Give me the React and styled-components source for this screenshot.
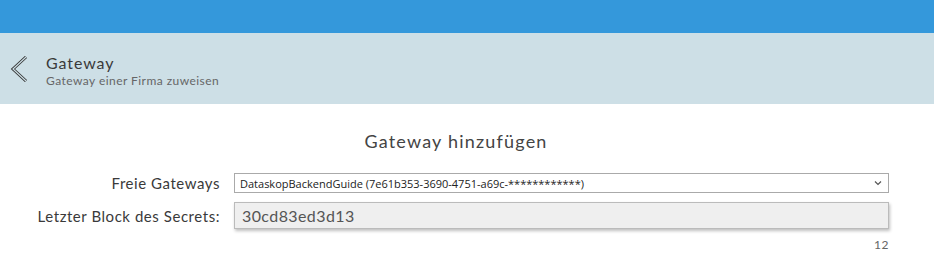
import React from 'react';
import styled, { createGlobalStyle } from 'styled-components';

const GlobalStyle = createGlobalStyle`
  html, body {
    margin: 0;
    padding: 0;
    background: #fff;
    font-family: Lato, "Noto Sans", sans-serif;
  }
`;

const TopBar = styled.div`
  height: 33px;
  background: #3498db;
`;

const PageHeader = styled.div`
  height: 71px;
  background: #cddfe6;
  display: flex;
  align-items: flex-start;
  padding: 21px 0 0 10px;
  box-sizing: border-box;
`;

const BackButton = styled.button`
  border: none;
  background: none;
  padding: 0;
  width: 20px;
  height: 26px;
  margin-right: 16px;
  margin-top: 2px;
  cursor: pointer;
  display: flex;
`;

const HeaderText = styled.div`
  display: flex;
  flex-direction: column;
`;

const Title = styled.div`
  font-size: 16px;
  color: #3a3a3a;
  line-height: 18px;
  letter-spacing: 0.9px;
`;

const Subtitle = styled.div`
  font-size: 12px;
  color: #666;
  line-height: 17px;
  letter-spacing: 0.45px;
`;

const Content = styled.div`
  padding: 26px 45px 0 0;
`;

const FormTitle = styled.h2`
  margin: 0 0 21px;
  text-align: center;
  font-weight: normal;
  font-size: 18px;
  color: #444;
  padding-left: 23px;
  line-height: 22px;
  letter-spacing: 1.2px;
`;

const Row = styled.div`
  display: grid;
  grid-template-columns: 220px 1fr;
  column-gap: 14px;
  align-items: center;
  margin-bottom: ${({ gap }) => gap || 0}px;
`;

const Label = styled.label`
  text-align: right;
  font-size: 15px;
  color: #3a3a3a;
  letter-spacing: 0.55px;
`;

const SelectBox = styled.div`
  height: 20px;
  border: 1px solid #aaa;
  box-sizing: border-box;
  display: flex;
  align-items: center;
  justify-content: space-between;
  padding: 0 6px 0 5px;
  font-family: "Open Sans", "Noto Sans", sans-serif;
  font-size: 11px;
  color: #222;
`;

const SecretInput = styled.div`
  height: 27px;
  border: 1px solid #bbb;
  background: #efefef;
  box-shadow: 1px 2px 3px rgba(0, 0, 0, 0.25);
  box-sizing: border-box;
  display: flex;
  align-items: center;
  padding-left: 7px;
  font-size: 16px;
  color: #555;
  letter-spacing: 0.4px;
`;

const Counter = styled.div`
  text-align: right;
  font-size: 12px;
  color: #666;
  margin-top: 8px;
  letter-spacing: 0.5px;
`;

const Chevron = () => (
  <svg width="20" height="26" viewBox="0 0 20 26">
    <path d="M16 1 L3 13 L16 25" fill="none" stroke="#333" strokeWidth="3" strokeLinejoin="miter" />
    <path d="M16 1 L3 13 L16 25" fill="none" stroke="#cddfe6" strokeWidth="1.2" />
  </svg>
);

const SmallChevron = () => (
  <svg width="8" height="6" viewBox="0 0 8 6">
    <path d="M1 1.5 L4 4.5 L7 1.5" fill="none" stroke="#555" strokeWidth="1.2" />
  </svg>
);

export default function App() {
  return (
    <>
      <GlobalStyle />
      <TopBar />
      <PageHeader>
        <BackButton>
          <Chevron />
        </BackButton>
        <HeaderText>
          <Title>Gateway</Title>
          <Subtitle>Gateway einer Firma zuweisen</Subtitle>
        </HeaderText>
      </PageHeader>
      <Content>
        <FormTitle>Gateway hinzufügen</FormTitle>
        <Row gap={9}>
          <Label>Freie Gateways</Label>
          <SelectBox>
            <span>DataskopBackendGuide (7e61b353-3690-4751-a69c-************)</span>
            <SmallChevron />
          </SelectBox>
        </Row>
        <Row>
          <Label>Letzter Block des Secrets:</Label>
          <SecretInput>30cd83ed3d13</SecretInput>
        </Row>
        <Row>
          <span />
          <Counter>12</Counter>
        </Row>
      </Content>
    </>
  );
}
